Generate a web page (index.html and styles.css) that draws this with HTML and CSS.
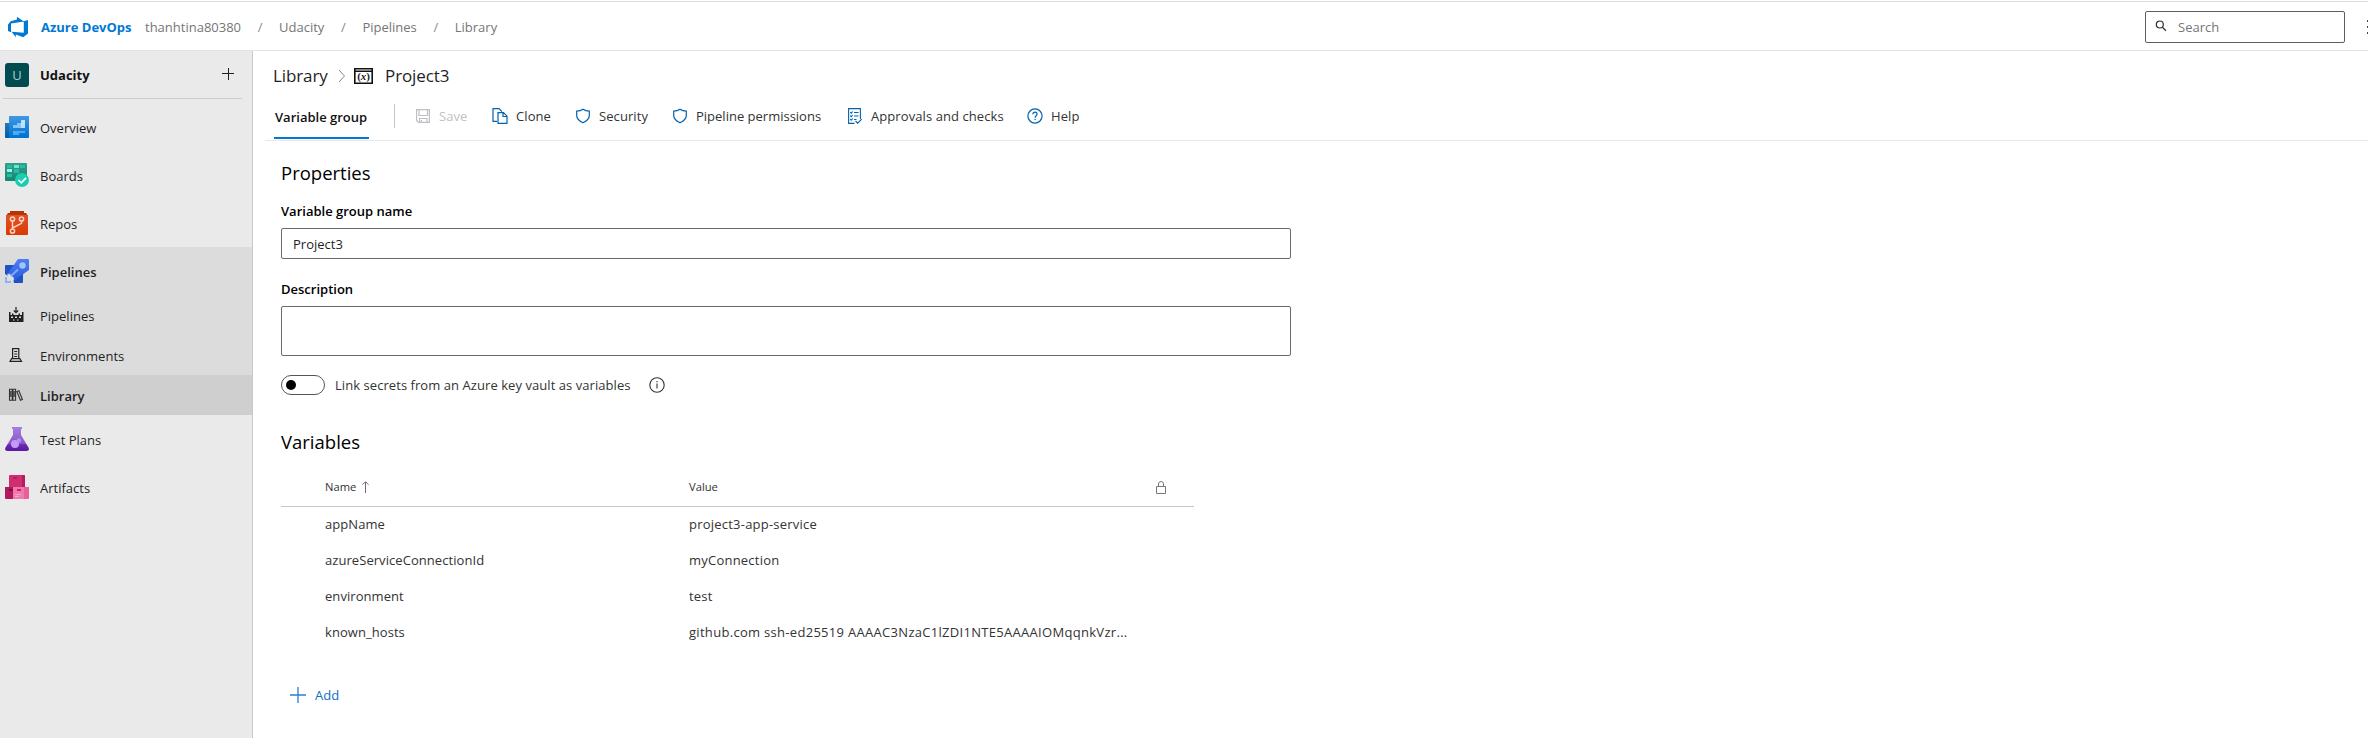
FILE: index.html
```html
<!DOCTYPE html>
<html lang="en">
<head>
<meta charset="utf-8">
<title>Project3 - Library</title>
<link rel="stylesheet" href="styles.css">
</head>
<body>
<header class="topbar">
  <svg class="logo" width="22" height="22" viewBox="0 0 22 22"><path fill="#0078d4" d="M21 4v13.500l-4.800 3.700-7.400-2.700v2.700l-4.200-5.400 12.200 1V5.300L21 4zM16.800 5.400 10 .8v2.700L3.700 5.300 1 8.400V15l3 1.300V7.500l12.800-2.100z"/></svg>
  <span class="brand">Azure DevOps</span>
  <nav class="crumbs">
    <span>thanhtina80380</span><i>/</i><span>Udacity</span><i>/</i><span>Pipelines</span><i>/</i><span>Library</span>
  </nav>
  <div class="search">
    <svg width="12" height="12" viewBox="0 0 12 12" fill="none" stroke="#333" stroke-width="1.200"><circle cx="4.800" cy="4.500" r="3.500"/><path d="M7.400 7.200 11 10.700"/></svg>
    <span>Search</span>
  </div>
  <div class="more"><b></b><b></b><b></b></div>
</header>
<div class="body">
  <aside class="sidebar">
    <div class="project">
      <span class="avatar">U</span>
      <span class="label">Udacity</span>
      <svg width="12" height="12" viewBox="0 0 12 12" stroke="#222" stroke-width="1"><path d="M0 5.500h12M6.500 0v12"/></svg>
    </div>
    <a class="item"><svg width="24" height="24" viewBox="0 0 24 24"><defs><linearGradient id="ov" x2="0" y2="1"><stop stop-color="#4099e4"/><stop offset="1" stop-color="#0072d0"/></linearGradient><linearGradient id="ov2" x2="0" y2="1"><stop stop-color="#2b76b5"/><stop offset="1" stop-color="#005ba1"/></linearGradient></defs><path fill="url(#ov2)" d="M0 8h5v15H1q-1 0-1-1z"/><path fill="url(#ov)" d="M4 1h20v21q0 1-1 1H4z"/><path fill="#83c5f8" d="M8 10h4V8h4v5H8z"/><path fill="#c0e1fc" d="M16 5h4v8h-4z"/><path fill="#50a8ee" d="M8 16h12v2H14v2H8z"/></svg><span>Overview</span></a>
    <a class="item"><svg width="24" height="24" viewBox="0 0 24 24"><defs><linearGradient id="bo" x2="0" y2="1"><stop stop-color="#329f8b"/><stop offset="1" stop-color="#168672"/></linearGradient></defs><path fill="url(#bo)" d="M1 0h20q1 0 1 1v17H1q-1 0-1-1V1q0-1 1-1z"/><path fill="#25bda3" d="M2 2h5v3H2zM15 2h5v3h-5zM9 6h5v4H9zM2 11h5v3H2z"/><path fill="#6be4cd" d="M9 2h5v3H9z"/><path fill="#94f7e3" d="M2 6h5v3H2z"/><circle cx="17" cy="17" r="7" fill="#1bcdb0"/><path d="m13.500 17 2.800 2.800 4.800-5" fill="none" stroke="#fff" stroke-width="1.700"/></svg><span>Boards</span></a>
    <a class="item"><svg width="24" height="24" viewBox="0 0 24 24"><defs><linearGradient id="re" x2="0" y2="1"><stop stop-color="#db532b"/><stop offset="1" stop-color="#da3b01"/></linearGradient></defs><path fill="#b83403" d="M5 0h14v2h2l2 3H1l2-3h2z"/><path fill="url(#re)" d="M1 4h22v19q0 1-1 1H2q-1 0-1-1z"/><g fill="none" stroke="#ffd0bd" stroke-width="1.500"><circle cx="7.500" cy="8" r="2.100"/><circle cx="16.500" cy="8" r="2.100"/><circle cx="7.500" cy="20" r="2.100"/><path d="M7.500 10v8M16.500 10v2.300L7.500 17"/></g></svg><span>Repos</span></a>
    <div class="group">
      <a class="item bold"><svg width="24" height="24" viewBox="0 0 24 24"><defs><linearGradient id="pi" x2="0" y2="1"><stop stop-color="#4c7ff0"/><stop offset="1" stop-color="#2b5fe0"/></linearGradient></defs><path fill="#1f52c4" d="M1 6h10L3 17 0 15V7q0-1 1-1zM8 20l10-7v10q0 1-1 1H9z"/><path fill="url(#pi)" d="M13 0h10q1 0 1 1v10L10.500 20.500l-7-7z"/><circle cx="17.500" cy="6.500" r="3.200" fill="#a7c2fa"/><path fill="none" stroke="#80a8f8" stroke-width="2" d="m5.500 17.500 7.500-7"/><path fill="#dfe8fa" d="M3 14 9.500 20.500 8 22 2 16z" opacity=".75"/><path fill="#90b2f5" d="M0 18h2v4h4v2H0z"/></svg><span>Pipelines</span></a>
      <a class="item sub"><svg width="16" height="16" viewBox="0 0 16 16"><path fill="none" stroke="#222" stroke-width="1.200" d="M8 0v5.500M5.800 3.500 8 5.700l2.200-2.200"/><path fill="#222" fill-rule="evenodd" d="M1 5h1.500v3H4V6.500h1.500V8h5V6.500H12V8h2V5h1.500v10H1zM3 9.500V11h2V9.500zm4 0V11h2V9.500zm4 0V11h2V9.500zM5 12.500v1h1.500v-1zm4 0v1h1.500v-1z"/></svg><span>Pipelines</span></a>
      <a class="item sub"><svg width="16" height="16" viewBox="0 0 16 16" fill="none" stroke="#222" stroke-width="1.200"><path d="M4.600 11V1.600h6.200V11M6.200 4.500h3M6.200 7h3M6.200 9.500h3M4 11l-2 3.400h11.500L11.500 11M3.500 11.600h8.500"/></svg><span>Environments</span></a>
      <a class="item sub current bold"><svg width="16" height="16" viewBox="0 0 16 16" fill="none" stroke="#333" stroke-width="1.100"><path d="M1.500 2.200h2.700v11H1.500zM4.900 2.200h2.700v11H4.900zM8.900 4.500l2-.8 3.500 8.800-2 .7zM2.800 4v6M6.200 4v6"/></svg><span>Library</span></a>
    </div>
    <a class="item"><svg width="24" height="24" viewBox="0 0 24 24"><defs><linearGradient id="te" x2="0" y2="1"><stop stop-color="#a57be0"/><stop offset=".7" stop-color="#8656c5"/><stop offset=".72" stop-color="#6a2bb0"/><stop offset="1" stop-color="#5c17a5"/></linearGradient></defs><path fill="url(#te)" d="M8 1h8v7l7.500 12.500Q25 24 21.500 24h-19Q-1 24 .5 20.500L8 8z"/><path fill="#a67be4" d="M7 0h10v2H7z"/><circle cx="10" cy="17" r="4" fill="#c39bf5"/><circle cx="14" cy="13.500" r="2.200" fill="#b88df0"/></svg><span>Test Plans</span></a>
    <a class="item"><svg width="24" height="24" viewBox="0 0 24 24"><path fill="#cf2e70" d="M5 0h14q1 0 1 1v11H4V1q0-1 1-1z"/><path fill="#b41e60" d="M17 0h2q1 0 1 1v11h-3zM8 2h4v2H8z"/><path fill="#b0195c" d="M0 12h8v12H1q-1 0-1-1z"/><path fill="#f078ac" d="M8 12h11v12H8z"/><path fill="#e8609a" d="M19 12h5v11q0 1-1 1h-4z"/><path fill="#7f0e3f" d="M4 14h4v2H4z"/><path fill="#c02667" d="M12 14h4v2h-4z"/><path fill="#f9a5ca" d="M10 19h6v1h-6zM10 21h4v1h-4z"/></svg><span>Artifacts</span></a>
  </aside>
  <main class="main">
    <div class="heading">
      <span>Library</span>
      <svg class="chev" width="8" height="14" viewBox="0 0 8 14" fill="none" stroke="#888"><path d="m1 1 5.500 6L1 13"/></svg>
      <svg class="var" width="19" height="16" viewBox="0 0 19 16"><path d="M.8.800h17.400v14.400H.8zM.8 3.300h17.400" fill="none" stroke="#111" stroke-width="1.600"/><text x="9.500" y="12.300" text-anchor="middle" class="vx">(<tspan class="it">x</tspan>)</text></svg>
      <span>Project3</span>
    </div>
    <div class="tabs">
      <div class="tab"><span>Variable group</span></div>
      <div class="sep"></div>
      <div class="cmd off c1"><svg width="16" height="16" viewBox="0 0 16 16" fill="none" stroke="#c0c0c4" stroke-width="1.200"><path d="M1.600 1.600h12.800v12.800H3.500l-1.900-1.900zM4 1.600v5.900h8.500V1.600M4.500 14.400V10.500h7.500v3.900M6.500 12v2.400"/></svg><span>Save</span></div>
      <div class="cmd c2"><svg width="16" height="16" viewBox="0 0 16 16" fill="none" stroke="#0063ad" stroke-width="1.200"><path d="M5 13.400H1V.6h6l3 3M6 4.600h5.500l3.500 3.600v7.200H6zM11 4.800v3.700h4"/></svg><span>Clone</span></div>
      <div class="cmd c3"><svg width="16" height="16" viewBox="0 0 16 16" fill="none" stroke="#0063ad" stroke-width="1.200"><path d="M8 1.300c1.700 1.200 3.800 1.800 6.300 1.800V7.500c0 3.300-2.800 5.600-6.300 7.300C4.500 13.100 1.700 10.800 1.700 7.500V3.100C4.200 3.100 6.300 2.500 8 1.300z"/></svg><span>Security</span></div>
      <div class="cmd c4"><svg width="16" height="16" viewBox="0 0 16 16" fill="none" stroke="#0063ad" stroke-width="1.200"><path d="M8 1.300c1.700 1.200 3.800 1.800 6.300 1.800V7.500c0 3.300-2.800 5.600-6.300 7.300C4.500 13.100 1.700 10.800 1.700 7.500V3.100C4.200 3.100 6.300 2.500 8 1.300z"/></svg><span>Pipeline permissions</span></div>
      <div class="cmd c5"><svg width="16" height="16" viewBox="0 0 16 16" fill="none" stroke="#0063ad" stroke-width="1.100"><path d="M7.500 15.400H1.600V.6h11.800V11M7 4.500h4.500M7 8h4.500M7 11.500h2.500M3.200 4.200l1 1 1.500-1.700M3.200 7.700l1 1 1.500-1.700M3.200 11.200l1 1 1.500-1.700M8.500 13l2.200 2.200 4-4"/></svg><span>Approvals and checks</span></div>
      <div class="cmd"><svg width="16" height="16" viewBox="0 0 16 16" fill="none" stroke="#0063ad" stroke-width="1.200"><circle cx="8" cy="8" r="7.100"/><path d="M5.900 6.300c0-1.300.9-2.100 2.100-2.100s2.100.8 2.100 1.900c0 1.600-2 1.700-2 3.600M8.100 10.800V12"/></svg><span>Help</span></div>
    </div>
    <section class="content">
      <h2>Properties</h2>
      <label class="l-name">Variable group name</label>
      <div class="input">Project3</div>
      <label>Description</label>
      <div class="textarea"></div>
      <div class="link">
        <div class="toggle"><b></b></div>
        <span class="t-link">Link secrets from an Azure key vault as variables</span>
        <svg width="16" height="16" viewBox="0 0 16 16" fill="none" stroke="#333" stroke-width="1.100"><circle cx="8" cy="8" r="7.200"/><path d="M8 6.500v5M8 4v1.300"/></svg>
      </div>
      <h2 class="h-vars">Variables</h2>
      <div class="table">
        <div class="row head"><div><span>Name</span><svg width="7" height="12" viewBox="0 0 7 12" fill="none" stroke="#6f6a78"><path d="M3.500 12V1M.5 3.700l3-3 3 3"/></svg></div><div><span>Value</span></div><svg width="10" height="13" viewBox="0 0 10 13" fill="none" stroke="#777"><path d="M.5 5.500h9v7h-9zM2.500 5.500V3q0-2.500 2.500-2.500T7.500 3v2.500"/></svg></div>
        <div class="row"><span class="key">appName</span><span class="value">project3-app-service</span></div>
        <div class="row"><span class="key">azureServiceConnectionId</span><span class="value">myConnection</span></div>
        <div class="row"><span class="key">environment</span><span class="value">test</span></div>
        <div class="row"><span class="key">known_hosts</span><span class="value long">github.com ssh-ed25519 AAAAC3NzaC1lZDI1NTE5AAAAIOMqqnkVzr...</span></div>
      </div>
      <div class="add"><svg width="16" height="16" viewBox="0 0 16 16" stroke="#2a7fd0" fill="none" stroke-width="1.300"><path d="M0 8h16M8 0v16"/></svg><span>Add</span></div>
    </section>
  </main>
</div>
</body>
</html>
```
FILE: styles.css
```css
* { box-sizing: border-box; }
body { margin: 0; width: 2368px; height: 738px; overflow: hidden; background: #fff; color: #1f1f1f; font: 13px/20px "Open Sans", "Noto Sans", sans-serif; display: flex; flex-direction: column; }
svg { flex: none; display: block; }
span { white-space: nowrap; }
.topbar { height: 51px; flex: none; border-top: 1px solid #fff; border-bottom: 1px solid #e3e3e3; box-shadow: inset 0 1px #dedede; display: flex; align-items: center; padding: 2px 0 0 7px; color: #767676; }
.logo { margin-top: 1px; }
.brand { margin-left: 12px; width: 104px; color: #0078d4; font-weight: 700; }
.crumbs { display: flex; flex: 1; }
.crumbs i { font-style: normal; width: 38px; text-align: center; color: #8a8a8a; }
.search { width: 200px; height: 32px; border: 1px solid #605e5c; border-radius: 2px; display: flex; align-items: center; padding-left: 9px; gap: 11px; }
.search svg { margin-top: -2px; }
.more { width: 1px; margin-left: 22px; display: flex; flex-direction: column; gap: 4px; }
.more b { height: 2px; background: #444; }
.body { flex: 1; display: flex; min-height: 0; }
.sidebar { width: 253px; flex: none; background: #eaeaea; border-right: 1px solid #c8c8c8; }
.project { height: 48px; margin: 0 10px 4px 3px; padding: 0 8px 0 2px; border-bottom: 1px solid #cdcdcd; display: flex; align-items: center; }
.project svg { margin-top: -1px; }
.avatar { width: 24px; height: 24px; border-radius: 3px; background: #004b50; color: #a9cfd0; text-align: center; line-height: 24px; font-size: 13px; }
.project .label { flex: 1; margin-left: 11px; font-weight: 700; color: #111; }
.item { height: 48px; display: flex; align-items: center; padding-left: 5px; gap: 11px; }
.item span { padding-top: 2px; }
.bold { font-weight: 600; }
.group { background: #dcdcdc; }
.sub { height: 40px; padding-left: 8px; gap: 16px; }
.current { background: #cfcfcf; }
.main { flex: 1; display: flex; flex-direction: column; }
.heading { height: 48px; display: flex; align-items: center; padding: 2px 0 0 20px; font-size: 17px; line-height: 24px; letter-spacing: -.1px; }
.heading span { width: 64px; }
.chev { margin-left: 1px; }
.var { margin: 0 12px 0 8px; }
.vx { font: bold 11px "Liberation Serif", serif; fill: #222; }
.it { font-style: italic; }
.tabs { height: 42px; margin-left: 12px; border-bottom: 1px solid #e8e8e8; display: flex; color: #333; }
.tab { height: 40px; margin-left: 9px; width: 95px; padding: 8px 0 0 1px; border-bottom: 2px solid #0078d4; font-weight: 600; color: #111; }
.sep { width: 1px; height: 24px; margin: 5px 20px 0 25px; background: #c8c8c8; }
.cmd { display: flex; gap: 8px; height: 34px; align-items: center; letter-spacing: .08px; }
.off { color: #c2c2c2; }
.c1 { width: 77px; }
.c2 { width: 83px; }
.c3 { width: 97px; }
.c4 { width: 175px; letter-spacing: 0; }
.c5 { width: 180px; }
.content { padding: 18px 0 0 28px; }
h2 { margin: 0; font-size: 18.500px; line-height: 28px; font-weight: 400; color: #000; }
label { display: block; font-weight: 600; color: #000; }
.l-name { margin-top: 14px; }
.input { width: 1010px; height: 31px; border: 1px solid #6a6a6a; border-radius: 2px; padding: 5px 11px; margin: 7px 0 20px; }
.textarea { width: 1010px; height: 50px; border: 1px solid #6a6a6a; border-radius: 2px; margin: 7px 0 19px; }
.link { display: flex; align-items: center; height: 20px; color: #333; }
.toggle { width: 44px; height: 20px; border: 1px solid #555; border-radius: 10px; padding: 4px; margin-right: 10px; }
.toggle b { display: block; width: 10px; height: 10px; border-radius: 5px; background: #000; }
.t-link { width: 314px; letter-spacing: .06px; }
.h-vars { margin-top: 33px; }
.table { width: 913px; color: #333; margin-top: 12px; }
.row { display: grid; grid-template-columns: 364px 467px 10px; padding: 0 0 2px 44px; height: 36px; align-items: center; }
.head { height: 39px; padding-bottom: 0; border-bottom: 1px solid #c8c8c8; font-size: 11.200px; }
.head div { display: flex; align-items: center; gap: 6px; }
.key { letter-spacing: .06px; }
.value { letter-spacing: .22px; }
.long { letter-spacing: .3px; }
.add { display: flex; align-items: center; gap: 9px; margin: 34px 0 0 9px; color: #106ebe; }
```
